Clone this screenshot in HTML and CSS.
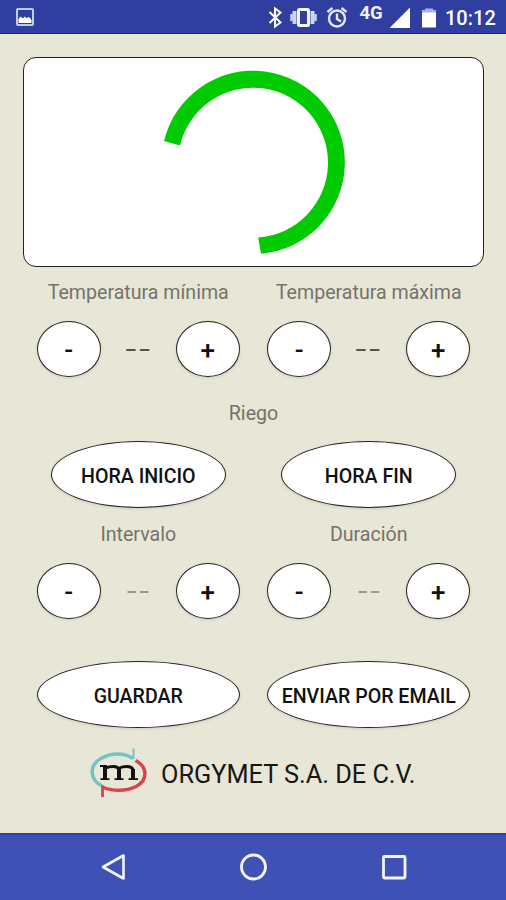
FILE: index.html
```
<!DOCTYPE html>
<html lang="es">
<head>
  <meta charset="UTF-8" />
  <meta name="viewport" content="width=device-width, initial-scale=1.0" />
  <title>Orgymet</title>
  <link rel="stylesheet" href="styles.css">
</head>
<body>
  <header class="status-bar">
    <svg class="picture-icon" width="18" height="18" viewBox="0 0 18 18">
      <rect x="1" y="1" width="16" height="16" rx="1" fill="none" stroke="#c3caf0" stroke-width="2"/>
      <path d="M2.500 15V11l2-2.500 2.500 2 1.500-2 2 1.500L13 9l2.500 3v3z" fill="#fff"/>
    </svg>
    <svg class="status-icons" width="180" height="34" viewBox="0 0 180 34">
      <path d="M9.500 12l11 10.500-5.500 4V8.500l5.500 4L9.500 23" fill="none" stroke="#fff" stroke-width="2"/>
      <g fill="none" stroke="#cdd3f3">
        <path d="M34.500 11v13M52.500 11v13" stroke-width="4"/>
        <path d="M31.500 14v7M55.500 14v7" stroke-width="2.500"/>
        <rect x="38.500" y="9.500" width="10" height="16" rx="1" stroke="#f4f6ff" stroke-width="3"/>
      </g>
      <g fill="none" stroke="#e4e8fb" stroke-width="2.400">
        <circle cx="77" cy="18.500" r="8"/>
        <path d="M77 13.500v5.500l4 2.500M67.500 12l5-4M86.500 12l-5-4"/>
      </g>
      <text class="network" x="99.500" y="19">4G</text>
      <path d="M129.500 28L150 7.500V28z" fill="#fff"/>
      <path d="M162 10h3V8.500h8V10h3v3h-14z" fill="#a9b1df"/>
      <path d="M162 12.500h14V27.500h-14z" fill="#fff"/>
    </svg>
    <span class="clock">10:12</span>
  </header>

  <main class="content">
    <div class="gauge">
      <svg width="200" height="200" viewBox="0 0 200 200">
        <path d="M10 79A91.700 91.700 0 1 1 107 191.800L104.200 175.500A75 75 0 1 0 26 83.500z" fill="#00cb00"/>
      </svg>
    </div>

    <div class="labels temperature">
      <span>Temperatura mínima</span>
      <span>Temperatura máxima</span>
    </div>
    <div class="row">
      <div class="stepper">
        <button class="small">-</button>
        <span class="value dark">--</span>
        <button class="small">+</button>
      </div>
      <div class="stepper">
        <button class="small">-</button>
        <span class="value dark">--</span>
        <button class="small">+</button>
      </div>
    </div>

    <div class="section-title">Riego</div>
    <div class="row hours">
      <button class="wide">HORA INICIO</button>
      <button class="wide">HORA FIN</button>
    </div>

    <div class="labels timing">
      <span>Intervalo</span>
      <span>Duración</span>
    </div>
    <div class="row">
      <div class="stepper">
        <button class="small">-</button>
        <span class="value">--</span>
        <button class="small">+</button>
      </div>
      <div class="stepper">
        <button class="small">-</button>
        <span class="value">--</span>
        <button class="small">+</button>
      </div>
    </div>

    <div class="row actions">
      <button class="wide">GUARDAR</button>
      <button class="wide">ENVIAR POR EMAIL</button>
    </div>

    <footer class="brand">
      <svg width="58" height="52" viewBox="0 0 58 52">
        <g fill="none" stroke-width="3.500">
          <path d="M12.500 39C-1 33 -1 18 11 11.500C21 5.500 34 5.500 43 11.500" stroke="#73c4c0"/>
          <path d="M43.500 12V1.500" stroke="#73c4c0" stroke-width="2"/>
          <path d="M45.500 13.500C58 20 58 33 46 39.500C36 44.500 22 44.500 12.500 40" stroke="#d9434d"/>
          <path d="M12.500 38.500V50" stroke="#d9434d" stroke-width="2.800"/>
        </g>
        <g fill="none" stroke="#111">
          <path d="M10 19h7M10.500 32.200h9M24.500 32.200h9M38.500 32.200h9.500" stroke-width="1.800"/>
          <path d="M15 18.500v14M29 32.500V22M43 32.500V22" stroke-width="4"/>
          <path d="M16 21q3-1.500 7-1.500 6 0 6 4M29.500 21q3-1.500 7-1.500 6.500 0 6.500 4" stroke-width="3"/>
        </g>
      </svg>
      <span>ORGYMET S.A. DE C.V.</span>
    </footer>
  </main>

  <nav class="nav-bar">
    <svg width="28" height="30" viewBox="0 0 28 30">
      <path d="M3 15L23.500 3.500v23z" fill="none" stroke="#f3f5ff" stroke-width="2.600" stroke-linejoin="round"/>
    </svg>
    <svg width="28" height="30" viewBox="0 0 28 30">
      <circle cx="13.500" cy="15" r="12" fill="none" stroke="#f3f5ff" stroke-width="2.800"/>
    </svg>
    <svg width="28" height="30" viewBox="0 0 28 30">
      <rect x="3.500" y="4.500" width="21.500" height="21.500" rx="1" fill="none" stroke="#f3f5ff" stroke-width="2.800"/>
    </svg>
  </nav>
</body>
</html>
```

FILE: styles.css
```
* {
  box-sizing: border-box;
}
body {
  margin: 0;
  height: 900px;
  display: flex;
  flex-direction: column;
  background: #e8e6d7;
  font-family: Roboto, "Liberation Sans", sans-serif;
  overflow: hidden;
}
svg {
  display: block;
}
.status-bar {
  height: 34px;
  display: flex;
  align-items: center;
  padding: 0 10px 0 16px;
  background: #303f9f;
  border-bottom: 1px solid #1519a0;
  color: #fff;
}
.status-icons {
  margin-left: auto;
}
.network {
  font-size: 18.5px;
  font-weight: 700;
  fill: #f0f2ff;
}
.clock {
  width: 51px;
  margin-left: 5px;
  font-size: 20px;
  font-weight: 500;
  line-height: 34px;
  padding-top: 3px;
}
.content {
  flex: 1;
  padding: 23px 22px 0 23px;
}
.gauge {
  height: 210px;
  display: flex;
  align-items: center;
  justify-content: center;
  background: #fff;
  border: 1px solid #222;
  border-radius: 13px;
}
.labels, .row {
  display: grid;
  grid-template-columns: 1fr 1fr;
  justify-items: center;
}
.labels, .section-title {
  font-size: 19.6px;
  line-height: 24px;
  color: #74736b;
  text-align: center;
}
.temperature {
  padding: 14px 0 16px;
}
.stepper {
  width: 203px;
  display: flex;
  justify-content: space-between;
  align-items: center;
}
button {
  padding: 0;
  background: #fff;
  border: 1px solid #222;
  border-radius: 50%;
  box-shadow: 0 1px 3px rgba(0, 0, 0, 0.12);
  font-family: inherit;
  font-size: 19.6px;
  font-weight: 500;
  color: #111;
  white-space: nowrap;
}
.small {
  width: 64px;
  height: 56px;
  padding-top: 2px;
  font-size: 26px;
}
.value {
  margin-right: -1.5px;
  font-size: 20px;
  font-weight: 500;
  letter-spacing: 1px;
  color: #9a988c;
  transform: scaleX(1.6);
}
.dark {
  font-size: 26px;
  font-weight: 400;
  letter-spacing: 2px;
  color: #55534b;
  transform: scaleX(1.5);
}
.section-title {
  padding: 25px 0 15px;
}
.wide {
  width: 203px;
  height: 67px;
  padding-top: 3px;
}
.hours .wide {
  width: 175px;
}
.timing {
  padding: 15px 0 16px;
}
.actions {
  margin-top: 42px;
}
.brand {
  display: flex;
  align-items: center;
  gap: 13px;
  margin-top: 19px;
  padding-left: 67px;
  font-size: 25.3px;
  color: #171713;
}
.brand span {
  padding-top: 2px;
}
.nav-bar {
  height: 67px;
  display: flex;
  align-items: center;
  justify-content: space-between;
  padding: 0 98px 2px 100px;
  background: #3f51b5;
  border-top: 2px solid #2c40a9;
}
```
